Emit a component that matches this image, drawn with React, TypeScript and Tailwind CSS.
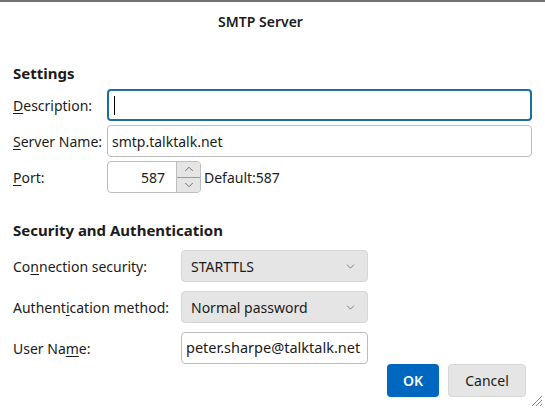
import { ChevronDown, ChevronUp } from 'lucide-react';

const font = { fontFamily: '"Noto Sans", "Open Sans", sans-serif' };

function Key({ children }: { children: string }) {
  return <span className="underline underline-offset-2">{children}</span>;
}

function Select({ value }: { value: string }) {
  return (
    <div className="flex h-[32px] w-[187px] items-center justify-between rounded-[4px] border border-[#d6d6d6] bg-[#e5e5e5] pl-[9px] pr-[10px]">
      <span>{value}</span>
      <ChevronDown size={13} strokeWidth={1.25} className="text-[#555]" />
    </div>
  );
}

export default function App() {
  return (
    <div className="relative h-[409px] w-[545px] overflow-hidden bg-white text-[14px] text-[#1b1b1b]" style={font}>
      <div className="h-[2px] bg-[#737373]" />
      <div className="pr-[24px] pt-[10px] text-center text-[14px] font-semibold leading-[20px]">SMTP Server</div>

      <div className="px-[13px] pt-[31px]">
        <h2 className="text-[15px] font-bold leading-[20px]">Settings</h2>

        <div className="mt-[6px] flex flex-col gap-[4px]">
          <div className="flex items-center">
            <label className="w-[94px] whitespace-nowrap"><Key>D</Key>escription:</label>
            <div className="flex h-[32px] flex-1 items-center rounded-[4px] border-2 border-[#1c6ea4] px-[5px]">
              <div className="h-[19px] w-[1px] bg-black" />
            </div>
          </div>
          <div className="flex items-center">
            <label className="w-[94px] whitespace-nowrap"><Key>S</Key>erver Name:</label>
            <div className="flex h-[32px] flex-1 items-center rounded-[4px] border border-[#bdbdbd] px-[4px]">
              smtp.talktalk.net
            </div>
          </div>
          <div className="flex items-center">
            <label className="w-[94px] whitespace-nowrap"><Key>P</Key>ort:</label>
            <div className="flex h-[32px] w-[94px] items-stretch overflow-hidden rounded-[4px] border border-[#bdbdbd]">
              <div className="flex flex-1 items-center justify-end pr-[11px]">587</div>
              <div className="flex w-[24px] flex-col border-l border-[#bdbdbd] bg-[#e5e5e5]">
                <div className="flex flex-1 items-center justify-center border-b border-[#9a9a9a]">
                  <ChevronUp size={14} strokeWidth={1.25} className="text-[#444]" />
                </div>
                <div className="flex flex-1 items-center justify-center">
                  <ChevronDown size={14} strokeWidth={1.25} className="text-[#444]" />
                </div>
              </div>
            </div>
            <span className="ml-[3px]">Default:587</span>
          </div>
        </div>

        <h2 className="mt-[27px] text-[15px] font-bold leading-[20px]">Security and Authentication</h2>

        <div className="mt-[10px] flex flex-col gap-[9px]">
          <div className="flex items-center">
            <label className="w-[168px] whitespace-nowrap">Co<Key>n</Key>nection security:</label>
            <Select value="STARTTLS" />
          </div>
          <div className="flex items-center">
            <label className="w-[168px] whitespace-nowrap">Authent<Key>i</Key>cation method:</label>
            <Select value="Normal password" />
          </div>
          <div className="flex items-center">
            <label className="w-[168px] whitespace-nowrap">User Na<Key>m</Key>e:</label>
            <div className="flex h-[32px] w-[187px] items-center overflow-hidden whitespace-nowrap rounded-[4px] border border-[#bdbdbd] px-[4px] text-[14.5px]">
              peter.sharpe@talktalk.net
            </div>
          </div>
        </div>
      </div>

      <div className="absolute bottom-[12px] right-[19px] flex gap-[9px]">
        <button className="h-[33px] w-[52px] rounded-[4px] bg-[#0067c0] font-semibold text-white">OK</button>
        <button className="h-[33px] w-[78px] rounded-[4px] border border-[#d6d6d6] bg-[#e5e5e5]">Cancel</button>
      </div>

      <svg className="absolute bottom-[2px] right-[2px]" width="14" height="14" viewBox="0 0 14 14">
        <path d="M13 3L3 13M13 7L7 13M13 11L11 13" stroke="#8a8a8a" strokeWidth="1" />
      </svg>
    </div>
  );
}
